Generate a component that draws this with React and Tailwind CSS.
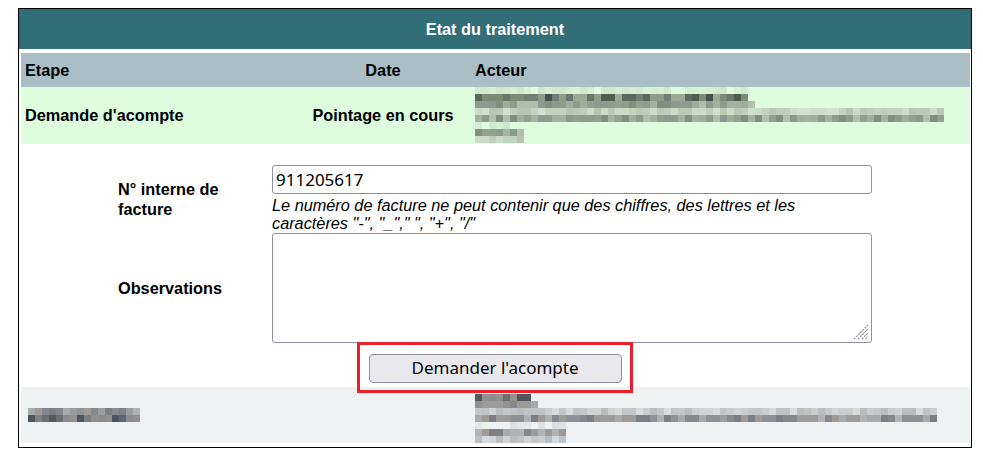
import React from "react";

const PAL = {
  green: {
    d: ["#44534f", "#6f7f74", "#5a6a60", "#7b8a73", "#4e5c52", "#8d9b87", "#66776f", "#9aa894"],
    m: ["#8e9d8a", "#7f8f80", "#a3b19f", "#93a08c", "#b0bfab", "#8a9a8e", "#9fae9a"],
    l: ["#c2d3bf", "#b5c6b2", "#cbdcc8", "#bfcfbb", "#d0e2cd", "#b9cab5"],
    v: ["#d3efd2", "#cfe8cd", "#d6f2d5", "#ddfddd", "#d0eacf"],
  },
  gray: {
    d: ["#5e6470", "#6b6f70", "#55595f", "#7d7f80", "#8a8d90", "#4f5660", "#938f8b"],
    m: ["#9a9c9e", "#8e9296", "#a7a9aa", "#85898e", "#b0b2b3", "#7c8085", "#a09a96"],
    l: ["#c4c7c9", "#d0d3d5", "#bfc3c6", "#d8dbdd", "#cacccd", "#b9bdc0"],
    v: ["#dfe2e4", "#e4e7e8", "#eff2f3", "#dadddf"],
  },
};

function rng(seed) {
  let s = seed;
  return () => {
    s = (s * 9301 + 49297) % 233280;
    return s / 233280;
  };
}

function Mosaic({ rows, palette, seed }) {
  const r = rng(seed);
  const pal = PAL[palette];
  return (
    <div className="flex flex-col">
      {rows.map((row, i) => (
        <div key={i} className="flex h-[7px]">
          {Array.from({ length: row.w }).map((_, j) => {
            const list = pal[row.t];
            const c = list[Math.floor(r() * list.length)];
            return <div key={j} className="h-[7px] w-[7px]" style={{ backgroundColor: c }} />;
          })}
        </div>
      ))}
    </div>
  );
}

export default function App() {
  return (
    <div className="w-[983px] h-[457px] bg-white pt-[8px] pl-[18px] font-['Liberation_Sans',Arial,sans-serif] text-black">
      <div className="w-[954px] h-[440px] border border-black flex flex-col">
        <div className="h-[40px] bg-[#326e78] flex items-center justify-center text-white font-bold text-[16.3px] pt-[1px]">
          Etat du traitement
        </div>
        <div className="ml-[2px] mt-[4px] w-[949px] flex flex-col">
          {/* header row */}
          <div className="h-[34px] bg-[#a9bfc5] flex items-center font-bold text-[16.3px]">
            <div className="w-[274px] pl-[4px]">Etape</div>
            <div className="w-[176px] text-center">Date</div>
            <div className="flex-1 pl-[4px]">Acteur</div>
          </div>
          {/* data row */}
          <div className="h-[57px] bg-[#ddfddd] flex items-center font-bold text-[16.3px]">
            <div className="w-[274px] pl-[4px]">Demande d'acompte</div>
            <div className="w-[176px] text-center">Pointage en cours</div>
            <div className="flex-1 pl-[4px] self-start">
              <Mosaic
                palette="green"
                seed={17}
                rows={[
                  { w: 39, t: "v" },
                  { w: 39, t: "d" },
                  { w: 40, t: "m" },
                  { w: 67, t: "l" },
                  { w: 67, t: "m" },
                  { w: 5, t: "v" },
                  { w: 7, t: "m" },
                  { w: 7, t: "l" },
                ]}
              />
            </div>
          </div>
          {/* form */}
          <div className="h-[243px] bg-white pt-[21px] pl-[97px]">
            <div className="grid grid-cols-[154px_600px] w-[754px]">
              <div className="flex items-center font-bold text-[16.3px] leading-[20px] pr-[30px]">
                N° interne de facture
              </div>
              <div className="flex flex-col">
                <input
                  readOnly
                  value="911205617"
                  className="h-[29px] w-[600px] border border-[#8f8f9d] rounded-[3px] px-[3px] text-[17px] font-['Noto_Sans',sans-serif] bg-white outline-none"
                />
                <div className="mt-[2px] italic text-[16.3px] leading-[18px] h-[37px]">
                  Le numéro de facture ne peut contenir que des chiffres, des lettres et les
                  <br />
                  caractères "-", "_"," ", "+", "/"
                </div>
              </div>
              <div className="flex items-center font-bold text-[16.3px] leading-[20px]">Observations</div>
              <div className="relative h-[110px]">
                <textarea
                  readOnly
                  className="h-[110px] w-[600px] border border-[#8f8f9d] rounded-[3px] resize-none outline-none bg-white block"
                />
                <svg className="absolute right-[3px] bottom-[3px]" width="16" height="16" viewBox="0 0 16 16">
                  <g stroke="#8f8f9d" strokeWidth="1.2" strokeDasharray="2 1">
                    <line x1="1" y1="15" x2="15" y2="1" />
                    <line x1="5" y1="15" x2="15" y2="5" />
                    <line x1="9" y1="15" x2="15" y2="9" />
                    <line x1="12.5" y1="15" x2="15" y2="12.5" />
                  </g>
                </svg>
              </div>
              <div className="col-span-2 flex justify-center pt-[11px]">
                <div className="relative">
                  <button className="h-[29px] w-[253px] bg-[#e9e9ed] border border-[#8f8f9d] rounded-[4px] text-[17px] font-['Noto_Sans',sans-serif] text-black flex items-center justify-center leading-none pb-[3px]">
                    Demander l'acompte
                  </button>
                  <div className="absolute -left-[12px] -top-[12px] -right-[11px] -bottom-[10px] border-[3px] border-[#e8202a] z-10 pointer-events-none" />
                </div>
              </div>
            </div>
          </div>
          {/* footer row */}
          <div className="h-[56px] bg-[#eff2f3] flex">
            <div className="w-[274px] pl-[7px] pt-[21px]">
              <Mosaic
                palette="gray"
                seed={5}
                rows={[
                  { w: 16, t: "m" },
                  { w: 16, t: "d" },
                ]}
              />
            </div>
            <div className="w-[176px]" />
            <div className="flex-1 pl-[4px] pt-[7px]">
              <Mosaic
                palette="gray"
                seed={29}
                rows={[
                  { w: 8, t: "d" },
                  { w: 9, t: "m" },
                  { w: 66, t: "l" },
                  { w: 66, t: "m" },
                  { w: 13, t: "v" },
                  { w: 13, t: "m" },
                  { w: 13, t: "l" },
                ]}
              />
            </div>
          </div>
        </div>
      </div>
    </div>
  );
}
